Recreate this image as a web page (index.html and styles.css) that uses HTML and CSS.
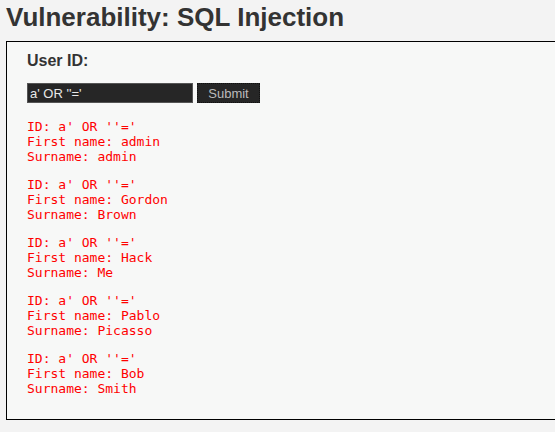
FILE: index.html
```html
<!DOCTYPE html>
<html>
<head>
<meta charset="utf-8">
<link rel="stylesheet" href="styles.css">
</head>
<body>
<h1 class="title">Vulnerability: SQL Injection</h1>
<div class="area">
  <form class="form">
    <p class="label">User ID:</p>
    <div class="row">
      <input class="field" type="text" value="a' OR ''='">
      <button class="submit" type="button">Submit</button>
    </div>
  </form>
  <pre class="out">ID: a' OR ''='
First name: admin
Surname: admin</pre>
  <pre class="out">ID: a' OR ''='
First name: Gordon
Surname: Brown</pre>
  <pre class="out">ID: a' OR ''='
First name: Hack
Surname: Me</pre>
  <pre class="out">ID: a' OR ''='
First name: Pablo
Surname: Picasso</pre>
  <pre class="out">ID: a' OR ''='
First name: Bob
Surname: Smith</pre>
</div>
</body>
</html>
```
FILE: styles.css
```css
html, body {
  margin: 0;
  padding: 0;
  background: #f3f3f3;
  overflow: hidden;
}
body {
  font-family: "Liberation Sans", Arial, sans-serif;
  color: #333;
  width: 555px;
  height: 432px;
}
.title {
  font-size: 26px;
  font-weight: bold;
  margin: 3px 0 10px 6px;
  line-height: 28px;
  color: #333;
}
.area {
  margin: 0 0 0 6px;
  width: 600px;
  border: 1px solid #000;
  background: #f7f8f7;
  padding: 10px 20px 23px 20px;
  box-sizing: border-box;
}
.label {
  font-size: 16px;
  font-weight: bold;
  margin: 0 0 13px 0;
  line-height: 18px;
}
.row {
  display: flex;
  gap: 4px;
}
.field {
  width: 166px;
  height: 20px;
  box-sizing: border-box;
  background: #262626;
  border: 1px solid #555;
  color: #e8e8e8;
  font-family: "Liberation Sans", Arial, sans-serif;
  font-size: 13px;
  padding: 0 2px;
  margin: 0;
  outline: none;
}
.submit {
  width: 63px;
  height: 20px;
  box-sizing: border-box;
  background: #262626;
  border: 1px dotted #111;
  color: #bbb;
  font-family: "Liberation Sans", Arial, sans-serif;
  font-size: 13px;
  padding: 0;
  margin: 0;
}
.out {
  font-family: "DejaVu Sans Mono", monospace;
  font-size: 13px;
  line-height: 15px;
  color: #f00;
  margin: 13px 0 0 0;
}
.form + .out {
  margin-top: 16px;
}
```
